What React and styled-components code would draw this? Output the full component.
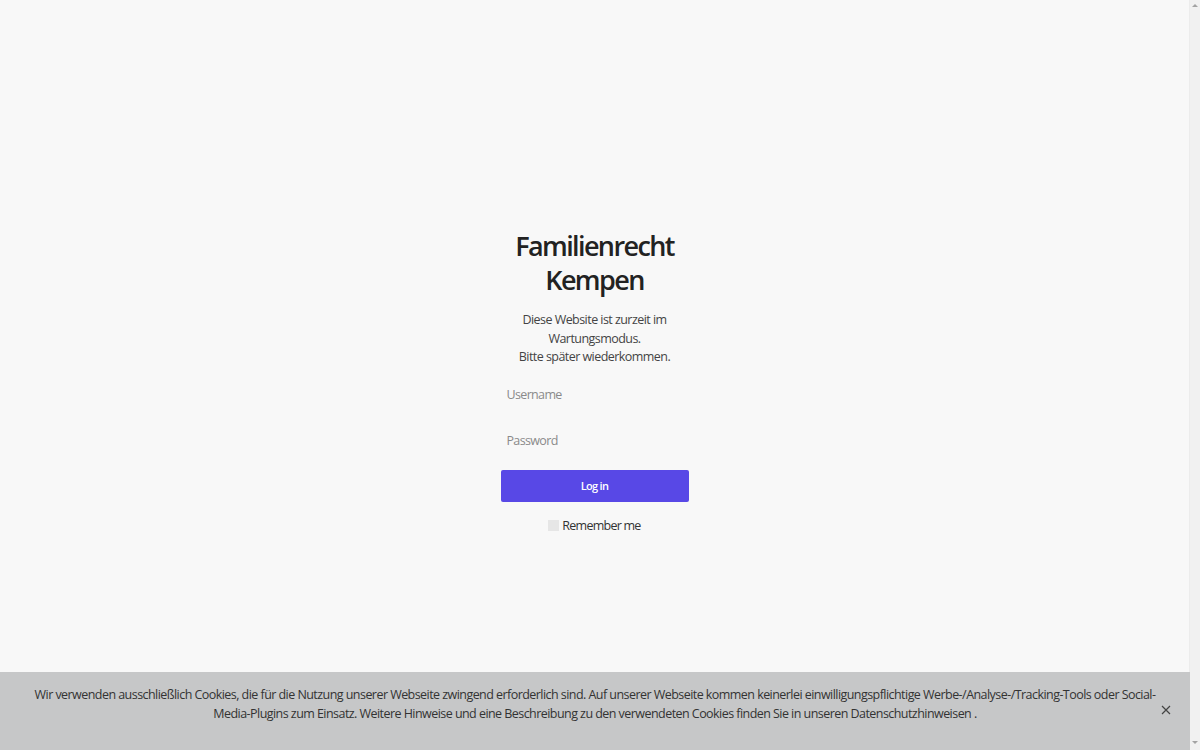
import React from 'react';
import styled, { createGlobalStyle } from 'styled-components';

const GlobalStyle = createGlobalStyle`
  html, body {
    margin: 0;
    padding: 0;
    height: 100%;
    overflow: hidden;
  }
  body {
    background: #f8f8f8;
    font-family: "Open Sans", "Noto Sans", sans-serif;
    letter-spacing: -0.55px;
    color: #333;
  }
`;

const Page = styled.div`
  display: flex;
  height: 750px;
  width: 1200px;
`;

const Main = styled.main`
  flex: 1 1 auto;
  display: flex;
  justify-content: center;
  align-items: flex-start;
  padding-top: 229px;
  background: #f8f8f8;
`;

const ScrollTrack = styled.div`
  flex: 0 0 10px;
  background: #f1f1f1;
  border-left: 1px solid #ececec;
  position: relative;
`;

const ScrollArrow = styled.span`
  position: absolute;
  left: 2px;
  bottom: 6px;
  width: 0;
  height: 0;
  border-left: 3px solid transparent;
  border-right: 3px solid transparent;
  border-top: 3px solid #a3a3a3;
`;

const ScrollArrowUp = styled(ScrollArrow)`
  top: 4px;
  bottom: auto;
  border-top: none;
  border-bottom: 3px solid #a3a3a3;
`;

const Column = styled.div`
  width: 188px;
  display: flex;
  flex-direction: column;
  align-items: center;
  text-align: center;
`;

const Title = styled.h1`
  margin: 0;
  font-size: 27px;
  font-weight: 600;
  line-height: 34px;
  letter-spacing: -1.6px;
  color: #222;
`;

const Notice = styled.p`
  margin: 14px 0 10px;
  font-size: 12.5px;
  line-height: 18.5px;
  color: #444;
`;

const Form = styled.form`
  width: 100%;
  display: flex;
  flex-direction: column;
`;

const Input = styled.input`
  box-sizing: border-box;
  width: 100%;
  height: 36px;
  margin-bottom: 10px;
  padding: 0 6px;
  border: none;
  background: transparent;
  font-family: inherit;
  font-size: 12.5px;
  letter-spacing: -0.65px;
  color: #333;
  outline: none;

  &::placeholder {
    color: #8a8a8a;
  }
`;

const Button = styled.button`
  height: 32px;
  margin-top: 1px;
  border: none;
  border-radius: 2px;
  background: #5848e6;
  color: #fff;
  font-family: inherit;
  font-size: 11px;
  font-weight: 600;
  letter-spacing: -0.7px;
  cursor: pointer;
`;

const Remember = styled.label`
  display: flex;
  align-items: center;
  justify-content: center;
  gap: 3px;
  margin-top: 15px;
  font-size: 12.5px;
  letter-spacing: -0.75px;
  color: #333;
`;

const Check = styled.span`
  display: inline-block;
  width: 11px;
  height: 11px;
  background: #e6e6e6;
`;

const CookieBar = styled.div`
  position: fixed;
  left: 0;
  bottom: 0;
  width: 1190px;
  height: 78px;
  box-sizing: border-box;
  padding: 13px 30px 0;
  background: #c6c7c8;
`;

const CookieText = styled.p`
  margin: 0;
  text-align: center;
  font-size: 12.5px;
  line-height: 19px;
  color: #333;
`;

const Close = styled.button`
  position: absolute;
  right: 17px;
  top: 31px;
  width: 14px;
  height: 14px;
  padding: 0;
  border: none;
  background: transparent;
  cursor: pointer;
`;

export default function App() {
  return (
    <>
      <GlobalStyle />
      <Page>
        <Main>
          <Column>
            <Title>Familienrecht Kempen</Title>
            <Notice>
              Diese Website ist zurzeit im Wartungsmodus.
              <br />
              Bitte später wiederkommen.
            </Notice>
            <Form onSubmit={e => e.preventDefault()}>
              <Input type="text" placeholder="Username" />
              <Input type="password" placeholder="Password" />
              <Button type="submit">Log in</Button>
              <Remember>
                <Check />
                Remember me
              </Remember>
            </Form>
          </Column>
        </Main>
        <ScrollTrack>
          <ScrollArrowUp />
          <ScrollArrow />
        </ScrollTrack>
      </Page>
      <CookieBar>
        <CookieText>
          Wir verwenden ausschließlich Cookies, die für die Nutzung unserer Webseite zwingend erforderlich sind. Auf unserer Webseite kommen keinerlei einwilligungspflichtige Werbe-/Analyse-/Tracking-Tools oder Social-Media-Plugins zum Einsatz. Weitere Hinweise und eine Beschreibung zu den verwendeten Cookies finden Sie in unseren Datenschutzhinweisen .
        </CookieText>
        <Close aria-label="Schließen">
          <svg width="14" height="14" viewBox="0 0 14 14">
            <path d="M3 3 L11 11 M11 3 L3 11" stroke="#444" strokeWidth="1.2" fill="none" />
          </svg>
        </Close>
      </CookieBar>
    </>
  );
}
